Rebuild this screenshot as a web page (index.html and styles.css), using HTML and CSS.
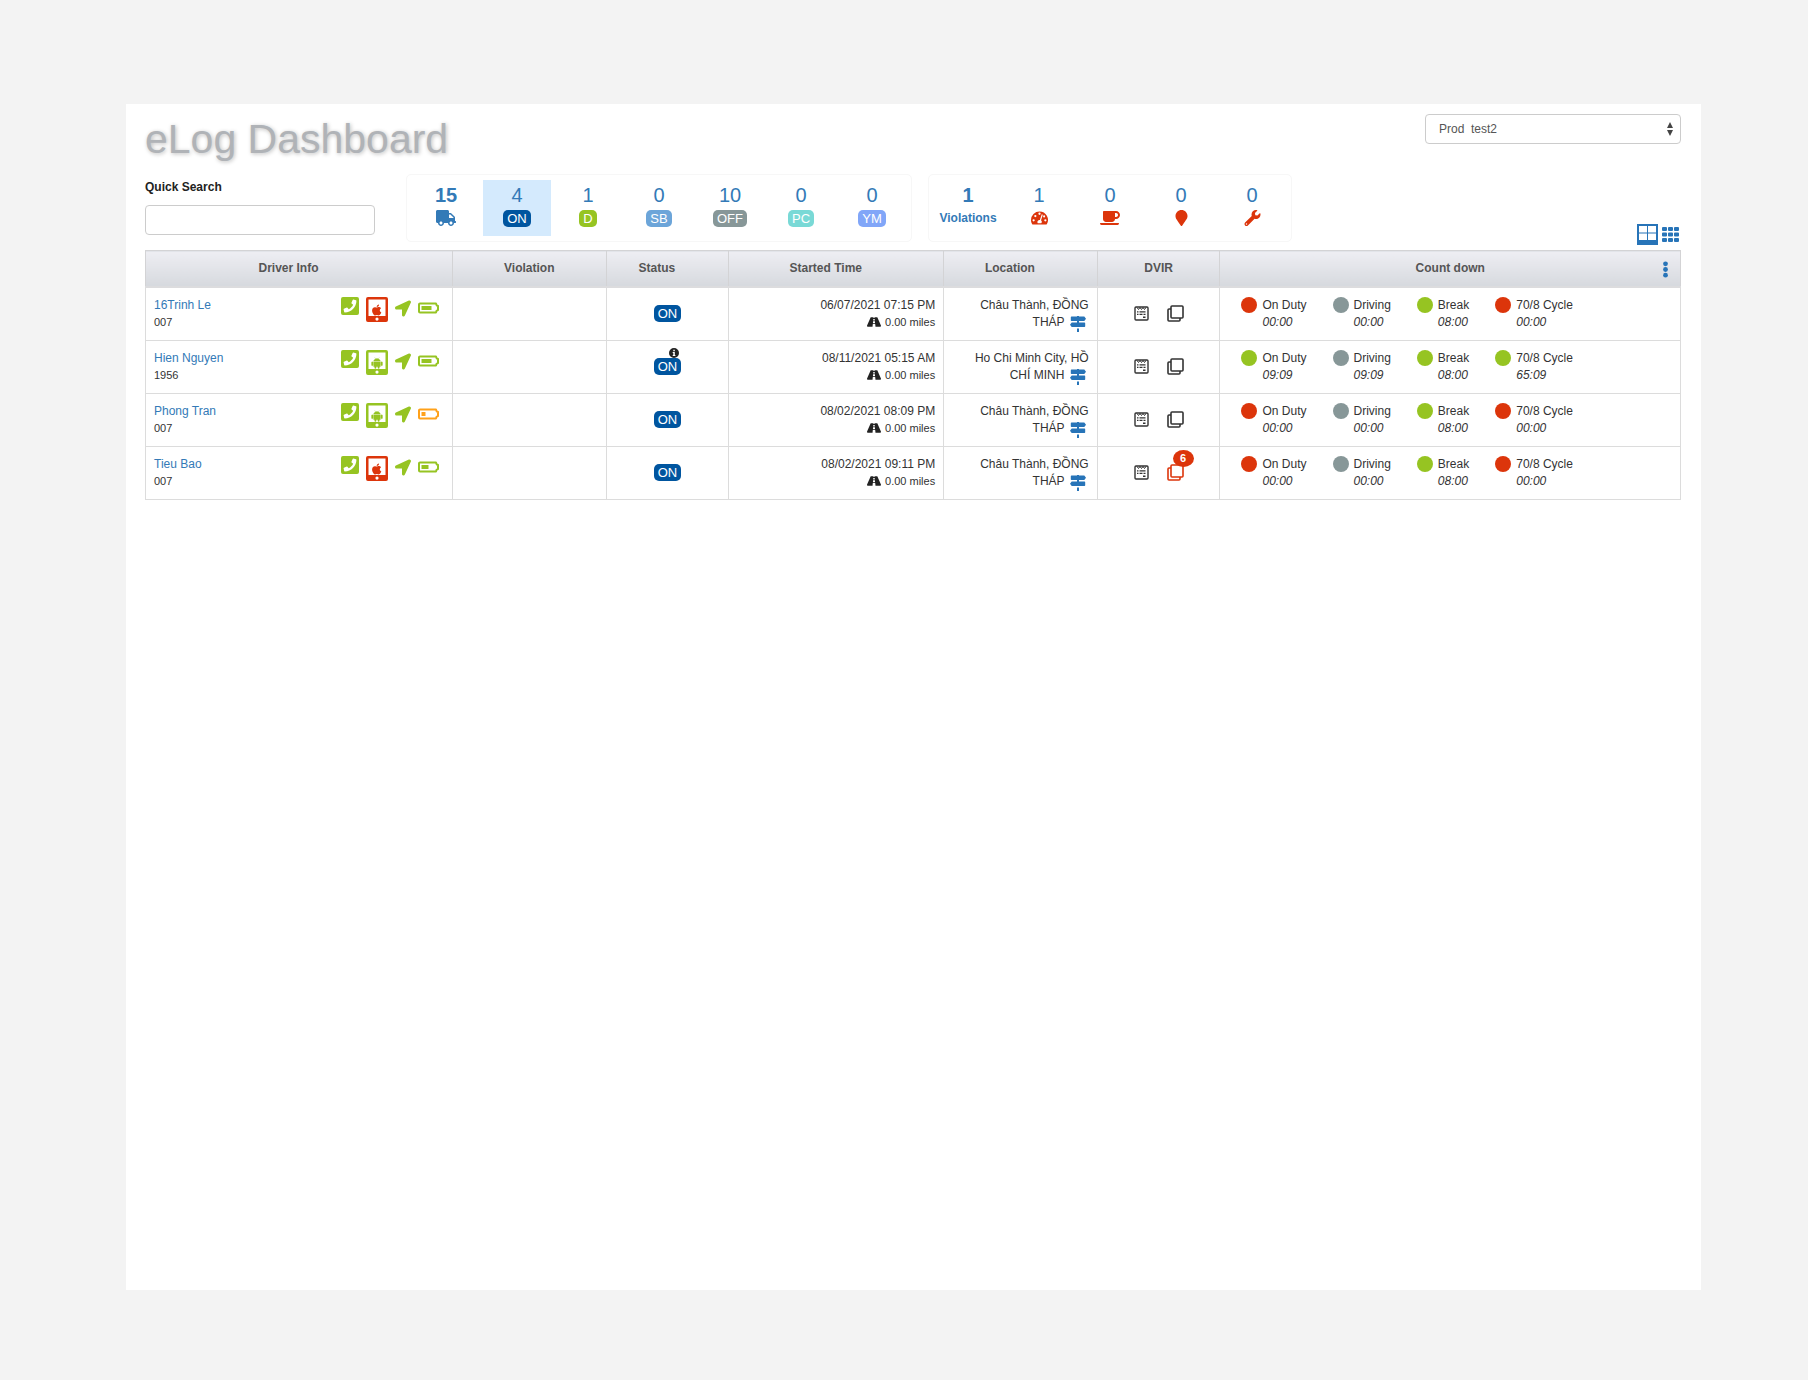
FILE: index.html
```html
<!DOCTYPE html>
<html lang="en">
<head>
  <meta charset="UTF-8">
  <title>eLog Dashboard</title>
  <meta name="viewport" content="width=device-width, initial-scale=1.0">
  <link rel="stylesheet" href="styles.css">
</head>
<body>
  <!-- icon sprite -->
  <svg class="sprite" aria-hidden="true">
    <symbol id="i-truck" viewBox="0 0 640 512"><path d="M624 352h-16V243.900c0-12.700-5.100-24.900-14.100-33.900L494 110.100c-9-9-21.200-14.100-33.900-14.100H416V48c0-26.500-21.500-48-48-48H48C21.500 0 0 21.500 0 48v320c0 26.500 21.500 48 48 48h16c0 53 43 96 96 96s96-43 96-96h128c0 53 43 96 96 96s96-43 96-96h48c8.800 0 16-7.200 16-16v-32c0-8.800-7.200-16-16-16zM160 464c-26.500 0-48-21.500-48-48s21.500-48 48-48 48 21.500 48 48-21.500 48-48 48zm320 0c-26.500 0-48-21.500-48-48s21.500-48 48-48 48 21.500 48 48-21.500 48-48 48zm80-208H416V144h44.100l99.900 99.900V256z"/></symbol>
    <symbol id="i-gauge" viewBox="0 0 18 16"><path fill-rule="evenodd" d="M9 1a9 9 0 0 0-9 9c0 1.700.5 3.300 1.300 4.600.2.300.5.400.8.400h13.800c.3 0 .6-.1.800-.4A9 9 0 0 0 9 1zM9 2.300a1.200 1.200 0 1 1 0 2.400 1.200 1.200 0 0 1 0-2.400zM2.800 9.300a1.200 1.200 0 1 1 0 2.400 1.200 1.200 0 0 1 0-2.400zM4.600 4.800a1.200 1.200 0 1 1 0 2.400 1.200 1.200 0 0 1 0-2.400zM15.200 9.300a1.200 1.200 0 1 1 0 2.400 1.200 1.200 0 0 1 0-2.400zM13.900 5.200a1.100 1.100 0 1 1 0 2.200 1.100 1.100 0 0 1 0-2.200zM11.400 4.100l1.100.4-1.900 6a2.200 2.200 0 0 1 .3 3H7.100a2.200 2.200 0 0 1 2.300-3.300z"/></symbol>
    <symbol id="i-cup" viewBox="0 0 640 512"><path d="M192 384h192c53 0 96-43 96-96h32c70.600 0 128-57.400 128-128S582.600 32 512 32H120c-13.300 0-24 10.700-24 24v232c0 53 43 96 96 96zM512 96c35.300 0 64 28.700 64 64s-28.700 64-64 64h-32V96h32zm47.700 384H48.300c-47.600 0-61-64-36-64h583.300c25 0 11.800 64-35.900 64z"/></symbol>
    <symbol id="i-marker" viewBox="0 0 384 512"><path d="M172.268 501.670C26.970 291.031 0 269.413 0 192 0 85.961 85.961 0 192 0s192 85.961 192 192c0 77.413-26.970 99.031-172.268 309.670-9.535 13.774-29.930 13.773-39.464 0z"/></symbol>
    <symbol id="i-wrench" viewBox="0 0 512 512"><path d="M507.730 109.100c-2.240-9.030-13.540-12.090-20.120-5.510l-74.360 74.360-67.880-11.310-11.310-67.880 74.360-74.360c6.620-6.620 3.430-17.900-5.660-20.160-47.380-11.740-99.550.910-136.580 37.930-39.640 39.640-50.550 97.100-34.050 147.200L18.740 402.760c-24.990 24.990-24.990 65.510 0 90.500 24.990 24.990 65.510 24.990 90.500 0l213.210-213.210c50.120 16.710 107.470 5.680 147.370-34.220 37.070-37.070 49.700-89.320 37.910-136.730zM64 472c-13.250 0-24-10.750-24-24 0-13.260 10.750-24 24-24s24 10.740 24 24c0 13.250-10.750 24-24 24z"/></symbol>
    <symbol id="i-phone" viewBox="0 32 448 448"><path d="M400 32H48A48 48 0 0 0 0 80v352a48 48 0 0 0 48 48h352a48 48 0 0 0 48-48V80a48 48 0 0 0-48-48zM94 416c-7.033 0-13.057-4.873-14.616-11.627l-14.998-65a15 15 0 0 1 8.707-17.160l69.998-29.999a15 15 0 0 1 17.518 4.289l30.997 37.885c48.944-22.963 88.297-62.858 110.781-110.780l-37.886-30.997a15.001 15.001 0 0 1-4.289-17.518l30-69.998a15 15 0 0 1 17.160-8.707l65 14.998A14.997 14.997 0 0 1 384 126c0 160.292-129.945 290-290 290z"/></symbol>
    <symbol id="i-apple" viewBox="0 0 22 25"><path fill-rule="evenodd" d="M2 0h18a2 2 0 0 1 2 2v21a2 2 0 0 1-2 2H2a2 2 0 0 1-2-2V2a2 2 0 0 1 2-2zm.5 2.500V19h17V2.500zM11 20.500a1.600 1.600 0 1 0 0 3.200 1.600 1.600 0 0 0 0-3.200z"/><path transform="translate(6 6.700) scale(.0245)" d="M318.700 268.700c-.2-36.700 16.400-64.400 50-84.800-18.800-26.900-47.200-41.700-84.700-44.600-35.500-2.800-74.300 20.700-88.500 20.700-15 0-49.400-19.700-76.400-19.700C63.300 141.200 4 184.800 4 273.500q0 39.300 14.400 81.200c12.800 36.700 59 126.700 107.200 125.200 25.200-.6 43-17.900 75.800-17.900 31.800 0 48.300 17.900 76.400 17.900 48.600-.7 90.400-82.500 102.600-119.300-65.200-30.700-61.700-90-61.700-91.900zm-56.600-164.200c27.300-32.400 24.800-61.900 24-72.500-24.100 1.400-52 16.400-67.900 34.900-17.500 19.800-27.800 44.300-25.600 71.900 26.100 2 49.900-11.400 69.500-34.300z"/></symbol>
    <symbol id="i-android" viewBox="0 0 22 25"><path fill-rule="evenodd" d="M2 0h18a2 2 0 0 1 2 2v21a2 2 0 0 1-2 2H2a2 2 0 0 1-2-2V2a2 2 0 0 1 2-2zm.5 2.500V19h17V2.500zM11 20.500a1.600 1.600 0 1 0 0 3.200 1.600 1.600 0 0 0 0-3.200z"/><path d="M7.600 11.300c.2-1.500 1.500-2.900 3.400-2.900s3.200 1.400 3.400 2.900zM7.600 11.900h6.800v4.300a.6.600 0 0 1-.6.600h-.5v1.100a.7.700 0 0 1-1.400 0v-1.100h-1.800v1.100a.7.700 0 0 1-1.400 0v-1.100h-.5a.6.600 0 0 1-.6-.6zM5.500 12.500a.8.800 0 0 1 1.600 0v2.500a.8.800 0 0 1-1.600 0zM14.900 12.500a.8.800 0 0 1 1.600 0v2.500a.8.800 0 0 1-1.600 0zM8.600 7.300l1 1.500M13.400 7.300l-1 1.500" stroke="currentColor" stroke-width=".3"/></symbol>
    <symbol id="i-arrow" viewBox="0 0 512 512"><path d="M444.520 3.520L28.740 195.420c-47.970 22.390-31.980 92.750 19.190 92.750h175.910v175.910c0 51.170 70.360 67.170 92.750 19.190l191.900-415.780c15.990-38.390-25.590-79.970-63.970-63.970z"/></symbol>
    <symbol id="i-battery" viewBox="0 0 21 12"><path d="M2 1.500h16l.6 1.800L20 4v4l-1.400.7-.6 1.800H2a1 1 0 0 1-1-1v-7a1 1 0 0 1 1-1z" fill="none" stroke="currentColor" stroke-width="2" stroke-linejoin="round"/><path d="M3.500 4h10v4h-10z"/></symbol>
    <symbol id="i-battery-mid" viewBox="0 0 21 12"><path d="M2 1.500h16l.6 1.800L20 4v4l-1.400.7-.6 1.800H2a1 1 0 0 1-1-1v-7a1 1 0 0 1 1-1z" fill="none" stroke="currentColor" stroke-width="2" stroke-linejoin="round"/><path d="M3.500 4h7v4h-7z"/></symbol>
    <symbol id="i-battery-low" viewBox="0 0 21 12"><path d="M2 1.500h16l.6 1.800L20 4v4l-1.400.7-.6 1.800H2a1 1 0 0 1-1-1v-7a1 1 0 0 1 1-1z" fill="none" stroke="currentColor" stroke-width="2" stroke-linejoin="round"/><path d="M3.500 4h4v4h-4z"/></symbol>
    <symbol id="i-road" viewBox="0 64 576 384"><path d="M573.190 402.670l-139.790-320C428.430 71.290 417.600 64 405.680 64h-97.590l2.450 23.160c.5 4.720-3.210 8.840-7.960 8.840h-29.160c-4.750 0-8.460-4.120-7.960-8.840L267.910 64h-97.590c-11.930 0-22.760 7.290-27.730 18.670L2.800 402.670C-6.450 423.860 8.310 448 30.540 448h196.840l10.310-97.680c.86-8.140 7.720-14.320 15.910-14.320h68.800c8.190 0 15.050 6.180 15.910 14.320L348.620 448h196.840c22.230 0 36.990-24.140 27.730-45.330zM260.400 135.160a8 8 0 0 1 7.960-7.160h39.290c4.090 0 7.530 3.090 7.960 7.160l4.600 43.580c.75 7.090-4.810 13.260-11.930 13.260h-40.540c-7.130 0-12.680-6.170-11.930-13.260l4.590-43.580zM315.640 304h-55.290c-9.500 0-16.910-8.230-15.910-17.680l5.070-48c.86-8.140 7.720-14.320 15.910-14.320h45.150c8.190 0 15.050 6.180 15.910 14.320l5.070 48c1 9.450-6.410 17.680-15.910 17.680z"/></symbol>
    <symbol id="i-sign" viewBox="0 0 16 16"><path d="M7 0h2v.5h5.300L16 2.700l-1.700 2.200H1.500a.7.700 0 0 1-.7-.7V1.200A.7.700 0 0 1 1.500.5H7zM7 4.900h2v1.600h5.500a.7.700 0 0 1 .7.700v3a.7.700 0 0 1-.7.700H1.700L0 8.700l1.700-2.200H7zM7 12.500h2V16H7z"/></symbol>
    <symbol id="i-note" viewBox="0 0 15 15"><rect x="1" y="1" width="13" height="13" rx="1" fill="none" stroke="currentColor" stroke-width="1.400"/><path d="M3 1.500l1.500 2L6 1.500l1.500 2L9 1.500l1.500 2L12 1.500" fill="none" stroke="currentColor"/><path d="M3 5.200h1.500v1.300H3zM5.500 5.200h6v1.300h-6zM3 7.800h1.500v1.300H3zM5.500 7.800h3v1.300h-3zM9.500 7.800h2v1.300h-2zM9 10.400h2.500v1.500H9z"/></symbol>
    <symbol id="i-copy" viewBox="0 0 17 17"><path d="M5 1h10a1 1 0 0 1 1 1v10a1 1 0 0 1-1 1H5a1 1 0 0 1-1-1V2a1 1 0 0 1 1-1zM4 4H2a1 1 0 0 0-1 1v10a1 1 0 0 0 1 1h10a1 1 0 0 0 1-1v-2" fill="none" stroke="currentColor" stroke-width="1.600"/></symbol>
    <symbol id="i-info" viewBox="0 0 10 10"><path fill-rule="evenodd" d="M5 0a5 5 0 1 0 0 10A5 5 0 0 0 5 0zM4.300 1.800h1.500v1.400H4.300zM3.700 4h2.100v3h.6v1H3.700V7h.6V5h-.6z"/></symbol>
    <symbol id="i-table" viewBox="0 0 21 21"><path fill-rule="evenodd" d="M0 0h21v21H0zM2 2v6.500h8V2zM11 2v6.500h8V2zM2 9.500V16h8V9.500zM11 9.500V16h8V9.500z"/></symbol>
    <symbol id="i-grid" viewBox="0 0 17 15"><path d="M1 0h3a1 1 0 0 1 1 1v2a1 1 0 0 1-1 1H1a1 1 0 0 1-1-1V1a1 1 0 0 1 1-1zM7 0h3a1 1 0 0 1 1 1v2a1 1 0 0 1-1 1H7a1 1 0 0 1-1-1V1a1 1 0 0 1 1-1zM13 0h3a1 1 0 0 1 1 1v2a1 1 0 0 1-1 1h-3a1 1 0 0 1-1-1V1a1 1 0 0 1 1-1zM1 5.500h3a1 1 0 0 1 1 1v2a1 1 0 0 1-1 1H1a1 1 0 0 1-1-1v-2a1 1 0 0 1 1-1zM7 5.500h3a1 1 0 0 1 1 1v2a1 1 0 0 1-1 1H7a1 1 0 0 1-1-1v-2a1 1 0 0 1 1-1zM13 5.500h3a1 1 0 0 1 1 1v2a1 1 0 0 1-1 1h-3a1 1 0 0 1-1-1v-2a1 1 0 0 1 1-1zM1 11h3a1 1 0 0 1 1 1v2a1 1 0 0 1-1 1H1a1 1 0 0 1-1-1v-2a1 1 0 0 1 1-1zM7 11h3a1 1 0 0 1 1 1v2a1 1 0 0 1-1 1H7a1 1 0 0 1-1-1v-2a1 1 0 0 1 1-1zM13 11h3a1 1 0 0 1 1 1v2a1 1 0 0 1-1 1h-3a1 1 0 0 1-1-1v-2a1 1 0 0 1 1-1z"/></symbol>
    <symbol id="i-dots" viewBox="0 0 5 17"><circle cx="2.500" cy="2.800" r="2.400"/><circle cx="2.500" cy="8.500" r="2.400"/><circle cx="2.500" cy="14.200" r="2.400"/></symbol>
    <symbol id="i-updown" viewBox="0 0 6 14"><path d="M3 0l3 6H0zM3 14l3-6H0z"/></symbol>
  </svg>

  <main class="page">
    <header class="top">
      <h1>eLog Dashboard</h1>
      <div class="company">
        <select class="company-select" aria-label="Company">
          <option>Prod &nbsp;test2</option>
        </select>
        <svg class="updown" aria-hidden="true"><use href="#i-updown"/></svg>
      </div>
    </header>

    <div class="toolbar">
      <div class="search">
        <label for="quickSearch">Quick Search</label>
        <input type="text" id="quickSearch">
      </div>

      <nav class="stats">
        <a class="stat total" href="#all"><span class="num">15</span><svg class="icon wide"><use href="#i-truck"/></svg></a>
        <a class="stat active" href="#on"><span class="num">4</span><span class="badge on">ON</span></a>
        <a class="stat" href="#d"><span class="num">1</span><span class="badge d">D</span></a>
        <a class="stat" href="#sb"><span class="num">0</span><span class="badge sb">SB</span></a>
        <a class="stat" href="#off"><span class="num">10</span><span class="badge off">OFF</span></a>
        <a class="stat" href="#pc"><span class="num">0</span><span class="badge pc">PC</span></a>
        <a class="stat" href="#ym"><span class="num">0</span><span class="badge ym">YM</span></a>
      </nav>

      <nav class="stats">
        <a class="stat total" href="#violations"><span class="num">1</span><span>Violations</span></a>
        <a class="stat" href="#driving" aria-label="Driving violations"><span class="num">1</span><svg class="icon red"><use href="#i-gauge"/></svg></a>
        <a class="stat" href="#break" aria-label="Break violations"><span class="num">0</span><svg class="icon wide red"><use href="#i-cup"/></svg></a>
        <a class="stat" href="#location" aria-label="Location violations"><span class="num">0</span><svg class="icon red"><use href="#i-marker"/></svg></a>
        <a class="stat" href="#repair" aria-label="Repair violations"><span class="num">0</span><svg class="icon red"><use href="#i-wrench"/></svg></a>
      </nav>

      <div class="views">
        <button type="button" aria-label="Table view"><svg class="view-table"><use href="#i-table"/></svg></button>
        <button type="button" aria-label="Grid view"><svg class="view-grid"><use href="#i-grid"/></svg></button>
      </div>
    </div>

    <table class="log">
      <colgroup>
        <col class="w20"><col class="w10"><col class="w8"><col class="w14"><col class="w10"><col class="w8"><col class="w30">
      </colgroup>
      <thead>
        <tr>
          <th class="sortable">Driver Info</th>
          <th>Violation</th>
          <th class="sortable">Status</th>
          <th class="sortable">Started Time</th>
          <th class="sortable">Location</th>
          <th>DVIR</th>
          <th class="last">Count down<button type="button" class="more" aria-label="Columns"><svg><use href="#i-dots"/></svg></button></th>
        </tr>
      </thead>
      <tbody>
        <tr>
          <td>
            <div class="driver">
              <div><a href="#driver1">16Trinh Le</a><small>007</small></div>
              <div class="devices"><svg class="phone"><use href="#i-phone"/></svg><svg class="tablet red"><use href="#i-apple"/></svg><svg class="arrow"><use href="#i-arrow"/></svg><svg class="battery"><use href="#i-battery"/></svg></div>
            </div>
          </td>
          <td></td>
          <td class="status"><span class="badge on">ON</span></td>
          <td class="right">06/07/2021 07:15 PM<small><svg class="road"><use href="#i-road"/></svg>0.00 miles</small></td>
          <td class="right">Châu Thành, ĐỒNG THÁP <svg class="sign"><use href="#i-sign"/></svg></td>
          <td class="dvir"><div><button type="button" aria-label="Notes"><svg class="note"><use href="#i-note"/></svg></button><button type="button" aria-label="Reports"><svg class="copy"><use href="#i-copy"/></svg></button></div></td>
          <td>
            <div class="counts">
              <div class="count bad">On Duty<em>00:00</em></div>
              <div class="count idle">Driving<em>00:00</em></div>
              <div class="count good">Break<em>08:00</em></div>
              <div class="count bad">70/8 Cycle<em>00:00</em></div>
            </div>
          </td>
        </tr>
        <tr>
          <td>
            <div class="driver">
              <div><a href="#driver2">Hien Nguyen</a><small>1956</small></div>
              <div class="devices"><svg class="phone"><use href="#i-phone"/></svg><svg class="tablet"><use href="#i-android"/></svg><svg class="arrow"><use href="#i-arrow"/></svg><svg class="battery"><use href="#i-battery"/></svg></div>
            </div>
          </td>
          <td></td>
          <td class="status"><span class="badge on">ON<svg class="info"><use href="#i-info"/></svg></span></td>
          <td class="right">08/11/2021 05:15 AM<small><svg class="road"><use href="#i-road"/></svg>0.00 miles</small></td>
          <td class="right">Ho Chi Minh City, HỒ CHÍ MINH <svg class="sign"><use href="#i-sign"/></svg></td>
          <td class="dvir"><div><button type="button" aria-label="Notes"><svg class="note"><use href="#i-note"/></svg></button><button type="button" aria-label="Reports"><svg class="copy"><use href="#i-copy"/></svg></button></div></td>
          <td>
            <div class="counts">
              <div class="count good">On Duty<em>09:09</em></div>
              <div class="count idle">Driving<em>09:09</em></div>
              <div class="count good">Break<em>08:00</em></div>
              <div class="count good">70/8 Cycle<em>65:09</em></div>
            </div>
          </td>
        </tr>
        <tr>
          <td>
            <div class="driver">
              <div><a href="#driver3">Phong Tran</a><small>007</small></div>
              <div class="devices"><svg class="phone"><use href="#i-phone"/></svg><svg class="tablet"><use href="#i-android"/></svg><svg class="arrow"><use href="#i-arrow"/></svg><svg class="battery low"><use href="#i-battery-low"/></svg></div>
            </div>
          </td>
          <td></td>
          <td class="status"><span class="badge on">ON</span></td>
          <td class="right">08/02/2021 08:09 PM<small><svg class="road"><use href="#i-road"/></svg>0.00 miles</small></td>
          <td class="right">Châu Thành, ĐỒNG THÁP <svg class="sign"><use href="#i-sign"/></svg></td>
          <td class="dvir"><div><button type="button" aria-label="Notes"><svg class="note"><use href="#i-note"/></svg></button><button type="button" aria-label="Reports"><svg class="copy"><use href="#i-copy"/></svg></button></div></td>
          <td>
            <div class="counts">
              <div class="count bad">On Duty<em>00:00</em></div>
              <div class="count idle">Driving<em>00:00</em></div>
              <div class="count good">Break<em>08:00</em></div>
              <div class="count bad">70/8 Cycle<em>00:00</em></div>
            </div>
          </td>
        </tr>
        <tr>
          <td>
            <div class="driver">
              <div><a href="#driver4">Tieu Bao</a><small>007</small></div>
              <div class="devices"><svg class="phone"><use href="#i-phone"/></svg><svg class="tablet red"><use href="#i-apple"/></svg><svg class="arrow"><use href="#i-arrow"/></svg><svg class="battery"><use href="#i-battery-mid"/></svg></div>
            </div>
          </td>
          <td></td>
          <td class="status"><span class="badge on">ON</span></td>
          <td class="right">08/02/2021 09:11 PM<small><svg class="road"><use href="#i-road"/></svg>0.00 miles</small></td>
          <td class="right">Châu Thành, ĐỒNG THÁP <svg class="sign"><use href="#i-sign"/></svg></td>
          <td class="dvir"><div><button type="button" aria-label="Notes"><svg class="note"><use href="#i-note"/></svg></button><button type="button" class="red" aria-label="Reports"><svg class="copy"><use href="#i-copy"/></svg><span class="bubble">6</span></button></div></td>
          <td>
            <div class="counts">
              <div class="count bad">On Duty<em>00:00</em></div>
              <div class="count idle">Driving<em>00:00</em></div>
              <div class="count good">Break<em>08:00</em></div>
              <div class="count bad">70/8 Cycle<em>00:00</em></div>
            </div>
          </td>
        </tr>
      </tbody>
    </table>
  </main>
</body>
</html>
```

FILE: styles.css
```css
* { box-sizing: border-box; }
body {
  margin: 0;
  padding: 104px 107px 90px 126px;
  background: #f3f3f3;
  color: #333;
  font: 12px/17px "Liberation Sans", Arial, sans-serif;
}
a { color: #337ab7; text-decoration: none; }
svg { fill: currentColor; display: block; }
button {
  border: 0;
  padding: 0;
  background: none;
  color: inherit;
  font: inherit;
  cursor: pointer;
}
.sprite { position: absolute; width: 0; height: 0; }
.page {
  min-height: calc(100vh - 194px);
  padding: 10px 20px 20px 19px;
  background: #fff;
}

/* title and company */
.top {
  display: flex;
  justify-content: space-between;
  align-items: flex-start;
  height: 60px;
}
h1 {
  margin: 0;
  font-size: 41px;
  font-weight: normal;
  line-height: 50px;
  color: #b0b3b7;
  text-shadow: 1px 1px 4px #bbb;
}
.company { position: relative; width: 256px; }
.company-select {
  appearance: none;
  width: 100%;
  height: 30px;
  padding: 0 13px;
  border: 1px solid #ccc;
  border-radius: 4px;
  background: #fff;
  color: #555;
  font: inherit;
}
.updown {
  position: absolute;
  right: 8px;
  top: 8px;
  width: 6px;
  height: 14px;
  color: #444;
  pointer-events: none;
}

/* search and counters */
.toolbar {
  display: flex;
  gap: 16px;
  align-items: flex-start;
  height: 76px;
}
.search { width: 245px; padding-top: 5px; }
.search label {
  display: block;
  margin-bottom: 9px;
  color: #222;
  font-weight: bold;
}
.search input {
  display: block;
  width: 230px;
  height: 30px;
  padding: 0 10px;
  border: 1px solid #ccc;
  border-radius: 4px;
  font: inherit;
}
.stats {
  display: flex;
  gap: 3px;
  padding: 5px;
  border: 1px solid #f7f7f7;
  border-radius: 5px;
}
.stat {
  display: flex;
  flex-direction: column;
  align-items: center;
  width: 68px;
  height: 56px;
}
.stat.active { background: #d4eafd; }
.stat.total { font-weight: bold; }
.num { font-size: 20px; line-height: 30px; }
.icon { width: 17px; height: 16px; }
.icon.wide { width: 20px; }
.red { color: #dc350b; }
.badge {
  position: relative;
  display: inline-block;
  padding: 0 4px;
  border-radius: 5px;
  color: #fff;
  font-size: 13px;
  line-height: 17px;
}
.on { background: #00559f; }
.d { background: #96c422; }
.sb { background: #6ca5d9; }
.off { background: #879798; }
.pc { background: #79d9d6; }
.ym { background: #81a6f8; }
.views {
  display: flex;
  gap: 4px;
  align-items: center;
  align-self: flex-end;
  margin-left: auto;
  padding: 0 2px 5px 0;
  color: #2774b8;
}
.view-table { width: 21px; height: 21px; }
.view-grid { width: 17px; height: 15px; }

/* driver table */
.log {
  width: 100%;
  table-layout: fixed;
  border-collapse: collapse;
}
.w8 { width: 8%; }
.w10 { width: 10%; }
.w14 { width: 14%; }
.w20 { width: 20%; }
.w30 { width: 30%; }
.log th {
  height: 36px;
  padding: 0;
  border: 1px solid #d3d3d5;
  background: linear-gradient(#eeeef3, #d6d9de);
  color: #555;
}
.log thead { border-bottom: 2px solid #dcdcde; }
.log th.sortable { padding-right: 21px; }
.log th.last { position: relative; }
.more {
  position: absolute;
  right: 12px;
  top: 10px;
  color: #2774b8;
}
.more svg { width: 5px; height: 17px; }
.log td {
  height: 53px;
  padding: 9px 8px;
  border: 1px solid #dcdcdc;
  vertical-align: top;
}
.log small { display: block; font-size: 11px; }
.log .right { text-align: right; }
.driver { display: flex; justify-content: space-between; }
.devices {
  display: flex;
  gap: 7px;
  padding-right: 5px;
  color: #96c422;
}
.phone { width: 18px; height: 18px; }
.tablet { width: 22px; height: 25px; }
.arrow { width: 16px; height: 17px; margin-top: 3px; }
.battery { width: 21px; height: 12px; margin-top: 5px; }
.battery.low { color: #ffa11a; }
.log .status { text-align: center; vertical-align: middle; }
.info {
  position: absolute;
  right: 2px;
  top: -10px;
  width: 10px;
  height: 10px;
  color: #222;
}
.road {
  display: inline-block;
  width: 14px;
  height: 10px;
  margin-right: 4px;
  vertical-align: -1px;
  color: #222;
}
.sign {
  display: inline-block;
  width: 16px;
  height: 16px;
  margin: -2px 3px -2px 2px;
  vertical-align: -4px;
  color: #2774b8;
}
.log .dvir { vertical-align: middle; }
.dvir div { display: flex; gap: 18px; align-items: center; justify-content: center; }
.dvir button { position: relative; }
.note { width: 15px; height: 15px; }
.copy { width: 17px; height: 17px; }
.bubble {
  position: absolute;
  left: 6px;
  top: -14px;
  width: 21px;
  border-radius: 50%;
  background: #dc350b;
  color: #fff;
  font-size: 11px;
  font-weight: bold;
}
.counts { display: flex; gap: 26px; padding-left: 13px; }
.count { position: relative; padding-left: 21px; }
.count em { display: block; }
.count::before {
  content: "";
  position: absolute;
  left: 0;
  top: 0;
  width: 16px;
  height: 16px;
  border-radius: 50%;
}
.good::before { background: #96c422; }
.bad::before { background: #dc350b; }
.idle::before { background: #879798; }
```
